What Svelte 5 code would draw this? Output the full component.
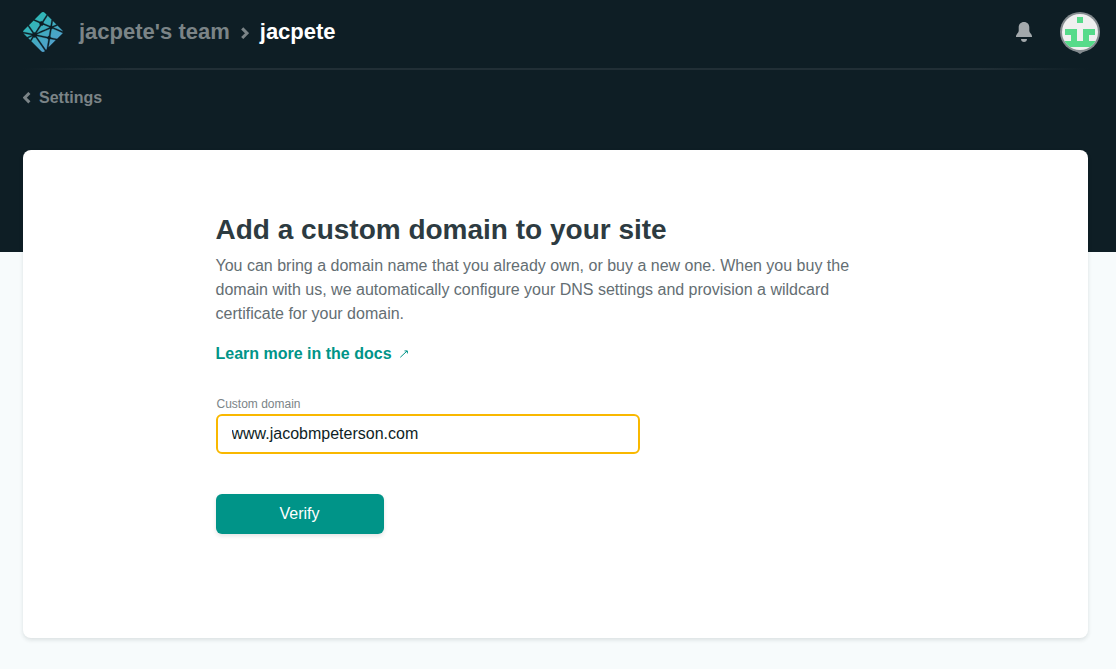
<script>
  let domain = $state('www.jacobmpeterson.com');
</script>

<div class="page">
  <header>
    <div class="bar">
      <a class="logo" href="/" aria-label="Netlify">
        <svg viewBox="1 1 38 38" width="40" height="40" aria-hidden="true">
          <defs>
            <linearGradient id="mark" x1=".2" y1=".1" x2=".75" y2=".85">
              <stop offset="0" stop-color="#2bbab4" />
              <stop offset="1" stop-color="#529fcb" />
            </linearGradient>
          </defs>
          <path fill="url(#mark)" stroke="#0e1e25" stroke-width=".3" d="M28.589 14.135l-.014-.006c-.008-.003-.016-.006-.023-.013a.11.11 0 0 1-.028-.093l.773-4.726 3.625 3.626-3.77 1.604a.083.083 0 0 1-.033.006h-.015c-.005-.003-.01-.007-.02-.017a1.716 1.716 0 0 0-.495-.381zm5.258-.288l3.876 3.876c.805.806 1.208 1.208 1.355 1.674.022.069.04.138.054.209l-9.263-3.923a.728.728 0 0 0-.015-.006c-.037-.015-.08-.032-.08-.07 0-.038.044-.056.081-.071l.012-.005 3.98-1.684zm5.127 7.003c-.2.376-.59.766-1.25 1.427l-4.37 4.369-5.652-1.177-.03-.006c-.05-.008-.103-.017-.103-.062a1.706 1.706 0 0 0-.655-1.193c-.023-.023-.017-.059-.01-.092 0-.005 0-.01.002-.014l1.063-6.526.004-.022c.006-.05.015-.108.06-.108a1.73 1.73 0 0 0 1.16-.665c.009-.01.015-.021.027-.027.032-.015.07 0 .103.014l9.65 4.082zm-6.625 6.801l-7.186 7.186 1.23-7.56.002-.01c.001-.01.003-.02.006-.029.01-.024.036-.034.061-.044l.012-.005a1.85 1.85 0 0 0 .695-.517c.024-.028.053-.055.09-.06a.09.09 0 0 1 .029 0l5.06 1.04zm-8.707 8.707l-.81.81-8.955-12.942a.424.424 0 0 0-.01-.014c-.014-.019-.029-.038-.026-.06.001-.016.011-.03.022-.042l.01-.013c.027-.04.05-.08.075-.123l.02-.035.003-.003c.014-.024.027-.047.051-.06.021-.01.05-.006.073-.001l9.921 2.046a.164.164 0 0 1 .076.033c.013.013.016.027.019.043a1.757 1.757 0 0 0 1.028 1.175c.028.014.016.045.003.078a.238.238 0 0 0-.015.045c-.125.76-1.197 7.298-1.485 9.063zm-1.692 1.691c-.597.591-.949.904-1.347 1.03a2 2 0 0 1-1.206 0c-.466-.148-.869-.55-1.674-1.356L8.73 28.73l2.349-3.643c.011-.018.022-.034.04-.047.025-.018.061-.01.091 0a2.434 2.434 0 0 0 1.638-.083c.027-.01.054-.017.075.002a.19.19 0 0 1 .028.032L21.95 38.05zM7.863 27.863L5.8 25.8l4.074-1.738a.084.084 0 0 1 .033-.007c.034 0 .054.034.072.065a2.91 2.91 0 0 0 .13.184l.013.016c.012.017.004.034-.008.05l-2.25 3.493zm-2.976-2.976l-2.61-2.61c-.444-.444-.766-.766-.99-1.043l7.936 1.646a.84.84 0 0 0 .03.005c.049.008.103.017.103.063 0 .05-.059.073-.109.092l-.023.01-4.337 1.837zM.831 19.892a2 2 0 0 1 .09-.495c.148-.466.55-.868 1.356-1.674l3.34-3.34a2175.525 2175.525 0 0 0 4.626 6.687c.027.036.057.076.026.106-.146.161-.292.337-.395.528a.16.16 0 0 1-.05.062c-.013.008-.027.005-.042.002H9.78L.831 19.891zm5.68-6.403l4.491-4.491c.422.185 1.958.834 3.332 1.414 1.04.44 1.988.84 2.286.97.03.012.057.024.07.054.008.018.004.041 0 .06a2.003 2.003 0 0 0 .523 1.828c.03.03 0 .073-.026.11l-.014.021-4.56 7.063c-.012.02-.023.037-.043.05-.024.015-.058.008-.086.001a2.274 2.274 0 0 0-.543-.074c-.164 0-.342.03-.522.063h-.001c-.02.003-.038.007-.054-.005a.21.21 0 0 1-.045-.051l-4.808-7.013zm5.398-5.398l5.814-5.814c.805-.805 1.208-1.208 1.674-1.355a2 2 0 0 1 1.206 0c.466.147.869.55 1.674 1.355l1.26 1.26-4.135 6.404a.155.155 0 0 1-.041.048c-.025.017-.06.01-.09 0a2.097 2.097 0 0 0-1.92.37c-.027.028-.067.012-.101-.003-.54-.235-4.74-2.01-5.341-2.265zm12.506-3.676l3.818 3.818-.92 5.698v.015a.135.135 0 0 1-.008.038c-.01.02-.03.024-.05.03a1.83 1.83 0 0 0-.548.273.154.154 0 0 0-.02.017c-.011.012-.022.023-.04.025a.114.114 0 0 1-.043-.007l-5.818-2.472-.011-.005c-.037-.015-.081-.033-.081-.071a2.198 2.198 0 0 0-.31-.915c-.028-.046-.059-.094-.035-.141l4.066-6.303zm-3.932 8.606l5.454 2.31c.03.014.063.027.076.058a.106.106 0 0 1 0 .057c-.016.08-.03.171-.03.263v.153c0 .038-.039.054-.075.069l-.011.004c-.864.369-12.13 5.173-12.147 5.173-.017 0-.035 0-.052-.017-.03-.03 0-.072.027-.11a.76.76 0 0 0 .014-.02l4.482-6.94.008-.012c.026-.042.056-.089.104-.089l.045.007c.102.014.192.027.283.027.68 0 1.31-.331 1.69-.897a.16.16 0 0 1 .034-.04c.027-.02.067-.01.098.004zm-6.246 9.185l12.28-5.237s.018 0 .035.017c.067.067.124.112.179.154l.027.017c.025.014.05.03.052.056 0 .01 0 .016-.002.025L25.756 23.7l-.004.026c-.007.05-.014.107-.061.107a1.729 1.729 0 0 0-1.373.847l-.005.008c-.014.023-.027.045-.05.057-.021.01-.048.006-.07.001l-9.793-2.02c-.01-.002-.152-.519-.163-.52z" />
        </svg>
      </a>
      <nav class="crumbs" aria-label="Breadcrumb">
        <a href="/teams/jacpete">jacpete's team</a>
        <svg class="chevron" viewBox="0 0 8 12" width="8" height="12" aria-hidden="true">
          <path d="M1.200 1.400 6 6.200 1.200 11" />
        </svg>
        <a class="current" href="/sites/jacpete">jacpete</a>
      </nav>
      <button class="bell" type="button" aria-label="Notifications">
        <svg viewBox="0 0 16 20" width="16" height="20" aria-hidden="true">
          <path d="M8 0C4.700 0 2.700 2.300 2.700 5.300V9C2.700 10.800 0 12.200 0 14.300V15H16V14.300C16 12.200 13.300 10.800 13.300 9V5.300C13.300 2.300 11.300 0 8 0Z" />
          <path d="M5 17H11C11 18.800 9.700 20 8 20S5 18.800 5 17Z" />
        </svg>
      </button>
      <button class="avatar" type="button" aria-label="Account menu">
        <svg viewBox="0 0 40 42" width="40" height="42" aria-hidden="true">
          <defs>
            <clipPath id="face"><circle cx="20" cy="20" r="18" /></clipPath>
          </defs>
          <path fill="#848b8f" d="M14 38h12L20 42z" />
          <circle cx="20" cy="20" r="20" fill="#848b8f" />
          <g clip-path="url(#face)">
            <path fill="#f0f0f0" d="M0 0h40v40H0z" />
            <path fill="#56db8a" d="M17 5h6v6h-6zM5 17h12v12h-6v-6H5zM23 17h12v6h-6v6h-6zM5 29h30v6H5z" />
          </g>
        </svg>
      </button>
    </div>
    <div class="rule"></div>
    <a class="back" href="/sites/jacpete/settings">
      <svg class="chevron" viewBox="0 0 8 12" width="8" height="12" aria-hidden="true">
        <path d="M6.400 1 1.700 5.700l4.700 4.700" />
      </svg>
      Settings
    </a>
  </header>

  <main>
    <div class="content">
      <h1>Add a custom domain to your site</h1>
      <p>
        You can bring a domain name that you already own, or buy a new one. When you buy the domain
        with us, we automatically configure your DNS settings and provision a wildcard certificate
        for your domain.
      </p>
      <a class="docs" href="/docs/custom-domains">
        Learn more in the docs
        <svg viewBox="0 0 8 8" width="8" height="8" aria-hidden="true">
          <path d="M.3 7.300 7 1M4.500 .9h2.900v2.500" />
        </svg>
      </a>
      <form onsubmit={(event) => event.preventDefault()}>
        <label for="domain">Custom domain</label>
        <input id="domain" type="text" bind:value={domain} />
        <button class="verify" type="submit">Verify</button>
      </form>
    </div>
  </main>
</div>

<style>
  :global(body) {
    margin: 0;
    background: #f7fbfc;
  }

  .page {
    box-sizing: border-box;
    min-height: 100vh;
    padding: 0 28px 31px 23px;
    background: linear-gradient(#0e1e25 252px, #f7fbfc 252px);
    color: #0e1e25;
    font: 16px/24px "Liberation Sans", Arial, sans-serif;
  }

  a {
    color: inherit;
    text-decoration: none;
  }

  svg {
    display: block;
    flex: none;
  }

  button {
    padding: 0;
    border: 0;
    background: none;
    font: inherit;
    cursor: pointer;
  }

  .bar {
    display: flex;
    align-items: flex-start;
    margin-right: -12px;
    padding: 12px 0 14px;
  }

  .crumbs {
    display: flex;
    flex: 1;
    align-items: center;
    gap: 11px;
    height: 42px;
    margin-left: 16px;
    color: #7b8487;
    font-size: 22px;
    font-weight: bold;
  }

  .crumbs a {
    padding-bottom: 2px;
  }

  .crumbs .current {
    color: #fff;
  }

  .chevron {
    fill: none;
    stroke: #7b8487;
    stroke-width: 3;
  }

  .bell {
    margin: 10px 28px 0 0;
    fill: #a3a9ac;
  }

  .avatar {
    height: 42px;
  }

  .rule {
    height: 2px;
    background: linear-gradient(90deg, #0e1e25, #212f36 10%, #212f36 90%, #0e1e25);
  }

  .back {
    display: flex;
    align-items: center;
    gap: 8px;
    width: fit-content;
    margin-top: 16px;
    color: #7b8487;
    font-weight: bold;
  }

  main {
    box-sizing: border-box;
    min-height: 488px;
    margin-top: 40px;
    padding: 64px 24px;
    border-radius: 8px;
    background: #fff;
    box-shadow: 0 2px 4px rgb(14 30 37 / 12%);
  }

  .content {
    max-width: 680px;
    margin: 0 auto;
  }

  h1 {
    margin: 0 0 8px;
    color: #2d3b41;
    font-size: 28px;
    line-height: 32px;
  }

  p {
    margin: 0 0 16px;
    color: #646e73;
  }

  .docs {
    display: flex;
    align-items: center;
    gap: 8px;
    width: fit-content;
    color: #009488;
    font-weight: bold;
  }

  .docs svg {
    fill: none;
    stroke: #009488;
    stroke-width: 1;
  }

  form {
    display: flex;
    flex-direction: column;
    align-items: flex-start;
    margin-top: 30px;
  }

  label {
    padding: 0 1px;
    color: #7b8487;
    font-size: 12px;
    line-height: 16px;
  }

  input {
    box-sizing: border-box;
    width: 100%;
    max-width: 424px;
    height: 40px;
    margin: 2px 0 40px;
    padding: 0 14px;
    border: 2px solid #f9b800;
    border-radius: 6px;
    outline: none;
    background: #fff;
    color: #0e1e25;
    font: inherit;
  }

  .verify {
    width: 168px;
    height: 40px;
    border-radius: 6px;
    background: #009488;
    box-shadow: 0 2px 4px rgb(14 30 37 / 12%);
    color: #fff;
  }
</style>
